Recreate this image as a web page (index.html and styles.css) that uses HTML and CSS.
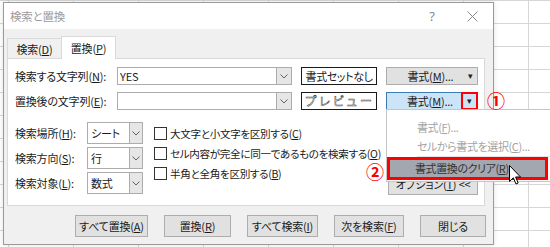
FILE: index.html
```html
<!DOCTYPE html>
<html lang="ja">
<head>
<meta charset="utf-8">
<title>検索と置換</title>
<link rel="stylesheet" href="styles.css">
</head>
<body>
<div class="dialog">
  <div class="titlebar">
    <span class="title">検索と置換</span>
    <span class="help">?</span>
    <span class="close"><svg width="11" height="11" viewBox="0 0 11 11"><path d="M0.5 0.5 L10.5 10.5 M10.5 0.5 L0.5 10.5" stroke="#8a8a8a" stroke-width="1" fill="none"/></svg></span>
  </div>
  <div class="tabs">
    <div class="tab">検索(<u>D</u>)</div>
    <div class="tab active">置換(<u>P</u>)</div>
  </div>
  <div class="panel">
    <div class="row">
      <span class="lbl">検索する文字列(<u>N</u>):</span>
      <div class="combo"><span class="val">YES</span><span class="dd"><svg width="8" height="5" viewBox="0 0 8 5"><path d="M0.5 0.5 L4 4 L7.5 0.5" stroke="#606060" fill="none"/></svg></span></div>
      <div class="pv">書式セットなし</div>
      <div class="fmt"><span class="fl">書式(<u>M</u>)...</span><span class="arr">▾</span></div>
    </div>
    <div class="row">
      <span class="lbl">置換後の文字列(<u>E</u>):</span>
      <div class="combo"><span class="val"></span><span class="dd"><svg width="8" height="5" viewBox="0 0 8 5"><path d="M0.5 0.5 L4 4 L7.5 0.5" stroke="#606060" fill="none"/></svg></span></div>
      <div class="pv outline">プレビュー</div>
      <div class="fmt hot"><span class="fl">書式(<u>M</u>)...</span><span class="arr red">▾</span></div>
    </div>
    <div class="opts">
      <div class="selcol">
        <div class="srow"><span class="slbl">検索場所(<u>H</u>):</span><div class="sel"><span class="v">シート</span><span class="dd"><svg width="8" height="5" viewBox="0 0 8 5"><path d="M0.5 0.5 L4 4 L7.5 0.5" stroke="#606060" fill="none"/></svg></span></div></div>
        <div class="srow"><span class="slbl">検索方向(<u>S</u>):</span><div class="sel"><span class="v">行</span><span class="dd"><svg width="8" height="5" viewBox="0 0 8 5"><path d="M0.5 0.5 L4 4 L7.5 0.5" stroke="#606060" fill="none"/></svg></span></div></div>
        <div class="srow"><span class="slbl">検索対象(<u>L</u>):</span><div class="sel"><span class="v">数式</span><span class="dd"><svg width="8" height="5" viewBox="0 0 8 5"><path d="M0.5 0.5 L4 4 L7.5 0.5" stroke="#606060" fill="none"/></svg></span></div></div>
      </div>
      <div class="checks">
        <div class="chk"><span class="box"></span>大文字と小文字を区別する(<u>C</u>)</div>
        <div class="chk"><span class="box"></span>セル内容が完全に同一であるものを検索する(<u>O</u>)</div>
        <div class="chk"><span class="box"></span>半角と全角を区別する(<u>B</u>)</div>
      </div>
      <button class="btn optbtn">オプション(<u>T</u>) &lt;&lt;</button>
    </div>
  </div>
  <div class="actions">
    <button class="btn w-a">すべて置換(<u>A</u>)</button>
    <button class="btn w-r">置換(<u>R</u>)</button>
    <button class="btn w-i">すべて検索(<u>I</u>)</button>
    <button class="btn w-f">次を検索(<u>F</u>)</button>
    <button class="btn w-c">閉じる</button>
  </div>
</div>

<div class="menu">
  <div class="mi">書式(<u>F</u>)...</div>
  <div class="mi">セルから書式を選択(<u>C</u>)...</div>
  <div class="msep"></div>
  <div class="mi cur">書式置換のクリア(<u>R</u>)</div>
</div>

<span class="mark m1">①</span>
<span class="mark m2">②</span>

<svg class="cursor" width="13" height="21" viewBox="0 0 13 21"><path d="M0.5 0.5 L0.5 16.5 L4.3 12.8 L7 19 L9.2 18 L6.6 12 L11.5 12 Z" fill="#fff" stroke="#000" stroke-width="1" stroke-linejoin="miter"/></svg>
</body>
</html>
```

FILE: styles.css
```css
body {
  margin: 0;
  width: 550px;
  height: 247px;
  overflow: hidden;
  position: relative;
  background-color: #fff;
  background-image:
    linear-gradient(to right, #d6d6d6 1px, transparent 1px),
    linear-gradient(to bottom, #d6d6d6 1px, transparent 1px);
  background-size: 65px 23px;
  background-position: 8px 0, 0 0;
  font-family: "Noto Sans CJK JP", "Noto Sans", sans-serif;
  font-size: 11px;
  letter-spacing: -0.2px;
  color: #1a1a1a;
  font-feature-settings: "palt";
}

u { text-decoration: underline; text-underline-offset: 1px; }

.dialog {
  position: absolute;
  left: 3px;
  top: 2px;
  width: 491px;
  height: 243px;
  box-sizing: border-box;
  border: 1px solid #9a9a9a;
  background: #f0f0f0;
  display: flex;
  flex-direction: column;
  box-shadow: 0 0 5px rgba(0, 0, 0, 0.12);
}

.titlebar {
  height: 26px;
  flex: none;
  background: #fff;
  display: flex;
  align-items: center;
  padding-left: 6px;
  color: #9b9b9b;
}
.title { flex: 1; font-size: 11.5px; }
.help {
  width: 20px;
  text-align: center;
  font-size: 13px;
  color: #8a8a8a;
  margin-right: 9px;
  font-family: "Noto Sans", sans-serif;
}
.close {
  width: 42px;
  height: 26px;
  display: flex;
  align-items: center;
  justify-content: center;
}

.tabs {
  height: 29px;
  flex: none;
  display: flex;
  align-items: flex-end;
  padding-left: 3px;
}
.tab {
  height: 20px;
  width: 54px;
  box-sizing: border-box;
  border: 1px solid #d9d9d9;
  border-bottom: none;
  border-right: none;
  display: flex;
  align-items: center;
  justify-content: center;
  background: #f0f0f0;
}
.tab.active {
  height: 23px;
  width: 55px;
  border-right: 1px solid #d9d9d9;
  background: #fff;
  margin-bottom: -1px;
  position: relative;
  z-index: 1;
}

.panel {
  margin-left: 3px;
  width: 478px;
  height: 148px;
  flex: none;
  box-sizing: border-box;
  border: 1px solid #d9d9d9;
  background: #fff;
  padding: 8px 6px 0 7px;
}

.row {
  display: flex;
  align-items: center;
  height: 18px;
}
.row + .row { margin-top: 7px; }
.lbl { width: 102px; white-space: nowrap; }

.combo {
  width: 175px;
  height: 18px;
  box-sizing: border-box;
  border: 1px solid #acacac;
  display: flex;
}
.combo .val { flex: 1; padding-left: 2px; line-height: 16px; }
.dd {
  width: 15px;
  box-sizing: border-box;
  border-left: 1px solid #acacac;
  background: #e6e6e6;
  display: flex;
  align-items: center;
  justify-content: center;
}

.pv {
  margin-left: 9px;
  width: 76px;
  height: 18px;
  box-sizing: border-box;
  border: 1px solid #1a1a1a;
  text-align: center;
  line-height: 16px;
  white-space: nowrap;
  letter-spacing: -0.4px;
}
.pv.outline {
  color: #fff;
  -webkit-text-stroke: 0.5px #444;
  letter-spacing: 3px;
  font-size: 12px;
  padding-left: 2px;
}

.fmt {
  margin-left: 9px;
  width: 92px;
  height: 18px;
  box-sizing: border-box;
  border: 1px solid #adadad;
  background: #e1e1e1;
  display: flex;
  align-items: center;
}
.fmt .fl { flex: 1; text-align: center; padding-left: 10px; line-height: 16px; }
.fmt .arr {
  width: 13px;
  height: 16px;
  font-size: 9px;
  line-height: 16px;
  text-align: center;
  color: #222;
}
.fmt.hot {
  background: #cce4f7;
  border-color: #3d7bb3;
}
.fmt .arr.red {
  box-shadow: 0 0 0 2px #f00;
  height: 14px;
  line-height: 14px;
  margin-right: 1px;
}

.opts {
  display: flex;
  margin-top: 12px;
  height: 73px;
}
.selcol { display: flex; flex-direction: column; gap: 3px; }
.srow { display: flex; align-items: center; height: 22px; }
.slbl { width: 72px; white-space: nowrap; }
.sel {
  width: 56px;
  height: 22px;
  box-sizing: border-box;
  border: 1px solid #acacac;
  display: flex;
}
.sel .v { flex: 1; padding-left: 3px; line-height: 20px; }
.sel .dd { width: 13px; }

.checks {
  margin-left: 11px;
  margin-top: 1px;
  display: flex;
  flex-direction: column;
  font-size: 10.6px;
  letter-spacing: -0.35px;
}
.chk { height: 20px; display: flex; align-items: center; white-space: nowrap; line-height: 15px; }
.box {
  width: 13px;
  height: 13px;
  box-sizing: border-box;
  border: 1px solid #333;
  margin-right: 3px;
  background: #fff;
}

.btn {
  height: 22px;
  box-sizing: border-box;
  border: 1px solid #adadad;
  background: #e1e1e1;
  font: inherit;
  letter-spacing: inherit;
  color: #1a1a1a;
  padding: 0;
  white-space: nowrap;
}
.optbtn {
  margin-left: auto;
  align-self: flex-end;
  width: 90px;
}

.actions {
  display: flex;
  margin-top: 9px;
  padding-left: 71px;
  gap: 16px;
}
.w-a { width: 73px; }
.w-r { width: 67px; }
.w-i { width: 71px; }
.w-f { width: 70px; }
.w-c { width: 66px; }

.menu {
  position: absolute;
  left: 386px;
  top: 109px;
  width: 164px;
  height: 73px;
  box-sizing: border-box;
  background: #fff;
  border: 1px solid #c6c6c6;
  border-right: none;
  padding-top: 8px;
  z-index: 5;
  letter-spacing: -0.4px;
}
.mi {
  height: 19px;
  line-height: 19px;
  padding-left: 30px;
  color: #a3a3a3;
  white-space: nowrap;
}
.msep { height: 1px; background: #e3e3e3; margin-left: 30px; }
.mi.cur {
  height: 23px;
  box-sizing: border-box;
  border: 3px solid #f00;
  background: #a3a7af;
  color: #333;
  line-height: 17px;
  padding-left: 25px;
  margin-right: 2px;
}

.mark {
  position: absolute;
  color: #f00;
  font-size: 18px;
  font-weight: bold;
  line-height: 16px;
  letter-spacing: 0;
  z-index: 6;
}
.m1 { left: 487px; top: 92px; }
.m2 { left: 366px; top: 163px; }

.cursor {
  position: absolute;
  left: 509px;
  top: 165px;
  z-index: 7;
}
```
